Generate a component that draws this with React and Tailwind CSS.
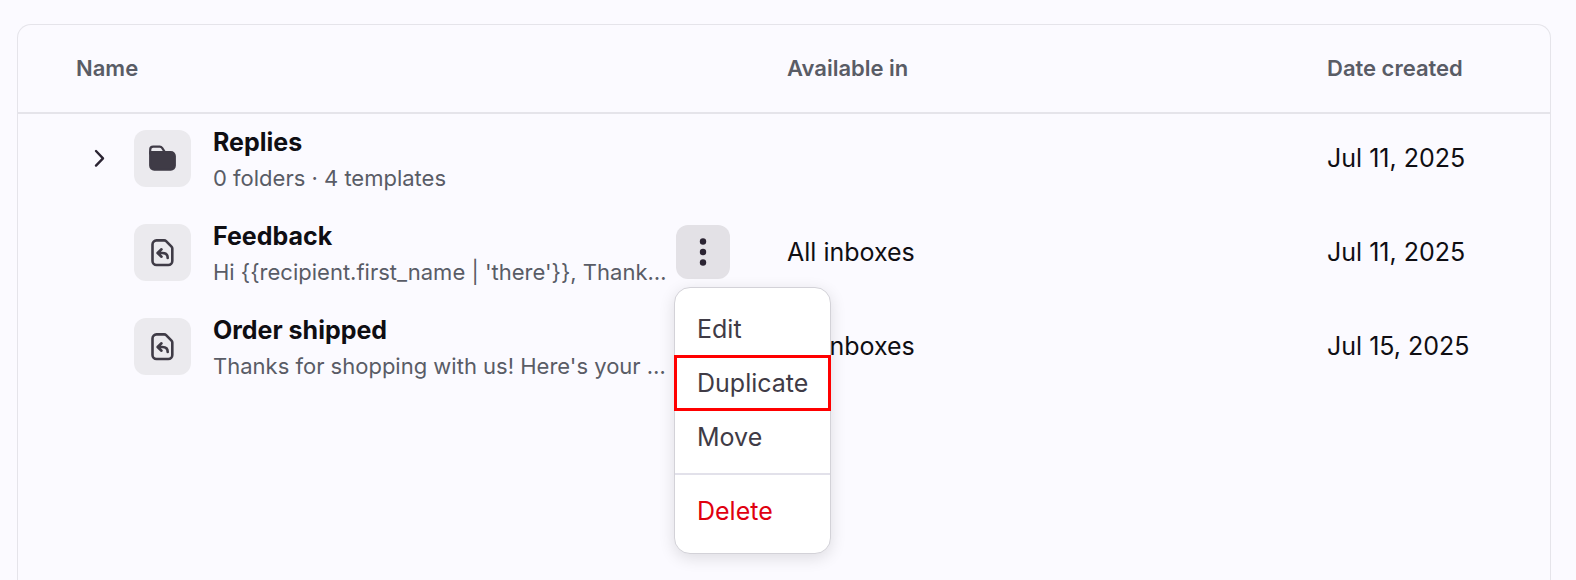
import { useState } from 'react';

const rows = [
  {
    id: 1,
    type: 'folder',
    name: 'Replies',
    description: '0 folders · 4 templates',
    inboxes: '',
    created: 'Jul 11, 2025',
  },
  {
    id: 2,
    type: 'template',
    name: 'Feedback',
    description: "Hi {{recipient.first_name | 'there'}}, Thank…",
    inboxes: 'All inboxes',
    created: 'Jul 11, 2025',
  },
  {
    id: 3,
    type: 'template',
    name: 'Order shipped',
    description: "Thanks for shopping with us! Here's your …",
    inboxes: 'All inboxes',
    created: 'Jul 15, 2025',
  },
];

const ChevronIcon = () => (
  <svg viewBox="0 1 32 32" className="w-8 h-8" fill="none" stroke="#2b2433" strokeWidth="2.4" strokeLinecap="round" strokeLinejoin="round">
    <path d="M13 9l7 7.3-7 7.3" />
  </svg>
);

const FolderIcon = () => (
  <svg viewBox="0.5 0.5 32 32" className="w-8 h-8" fill="none" stroke="#3f3b46" strokeWidth="2.2" strokeLinejoin="round">
    <path d="M3.7 12V7.2a3 3 0 0 1 3-3h6.6c1 0 1.7.3 2.3 1.1l2.6 4" />
    <path d="M3.7 9.6h20.6a4 4 0 0 1 4 4v9.5a4 4 0 0 1-4 4H7.7a4 4 0 0 1-4-4z" fill="#3f3b46" />
  </svg>
);

const TemplateIcon = () => (
  <svg viewBox="0.5 0.5 32 32" className="w-8 h-8" fill="none" stroke="#3f3b46" strokeWidth="2.6" strokeLinecap="round" strokeLinejoin="round">
    <path d="M10 3.9h7.6c.8 0 1.5.3 2 .8l5.4 5.4c.6.6.8 1.2.8 2v12.4a4 4 0 0 1-4 4H10a4 4 0 0 1-4-4V7.9a4 4 0 0 1 4-4z" />
    <path d="M15 12.8l-3.9 3.7 3.9 3.7M11.5 16.5H16c3 0 5.2 1.8 5.2 5" />
  </svg>
);

const DotsIcon = () => (
  <svg viewBox="0 0 32 32" className="w-8 h-8" fill="#2b2433">
    <circle cx="16" cy="5.5" r="3.2" />
    <circle cx="16" cy="16" r="3.2" />
    <circle cx="16" cy="26.5" r="3.2" />
  </svg>
);

const RowMenu = () => (
  <div
    role="menu"
    className="absolute -left-0.5 top-[62px] z-10 w-[157px] pt-[14px] pb-[15px] bg-white border border-[#d3d2d8] rounded-2xl shadow-[0_4px_16px_rgba(0,0,0,0.12)] text-[#3f3b46]"
  >
    <button role="menuitem" className="block w-full h-[54px] pt-0.5 px-[22px] text-left">Edit</button>
    <button role="menuitem" className="block w-full h-[54px] pt-0.5 px-[22px] text-left outline-3 -outline-offset-2 outline-[#ff0000]">
      Duplicate
    </button>
    <button role="menuitem" className="block w-full h-[54px] pt-0.5 px-[22px] text-left">Move</button>
    <div className="h-0.5 my-[9px] bg-[#e2e1ea]" />
    <button role="menuitem" className="block w-full h-[54px] pt-0.5 px-[22px] text-left text-[#e0000f]">Delete</button>
  </div>
);

const TemplateRow = ({ row, menuOpen, onMenuClick }) => (
  <tr>
    <td className="pt-[10px] pb-3 pl-[65px] pr-[34px]">
      <div className="flex items-start">
        <div className="w-[51px] h-[57px] mt-1.5 flex items-center shrink-0">
          {row.type === 'folder' && (
            <button aria-label="Expand folder">
              <ChevronIcon />
            </button>
          )}
        </div>
        <div className="w-[57px] h-[57px] mt-1.5 flex items-center justify-center shrink-0 bg-[#ebeaee] rounded-xl">
          {row.type === 'folder' ? <FolderIcon /> : <TemplateIcon />}
        </div>
        <div className="flex-1 min-w-0 ml-[22px] leading-9 whitespace-nowrap overflow-hidden">
          <p className="font-bold text-[#0f0e13]">{row.name}</p>
          <p className="text-[22px] leading-9 text-[#595c66]">{row.description}</p>
        </div>
        <div className="relative w-[54px] ml-2 mt-[7px] shrink-0">
          {menuOpen && (
            <>
              <button
                onClick={onMenuClick}
                aria-label="More actions"
                className="w-[54px] h-[54px] flex items-center justify-center bg-[#e3e1e6] rounded-xl"
              >
                <DotsIcon />
              </button>
              <RowMenu />
            </>
          )}
        </div>
      </div>
    </td>
    <td className="px-[23px] pb-1">{row.inboxes}</td>
    <td className="px-[23px] pb-1">{row.created}</td>
  </tr>
);

const App = () => {
  const [openRow, setOpenRow] = useState(2);

  return (
    <div className="min-h-screen flex flex-col pt-6 pl-[17px] pr-[25px] bg-[#fbfaff] font-['Inter',sans-serif] text-[25px] text-[#0f0e13]">
      <div className="flex-1 border border-b-0 border-[#e5e4ea] rounded-t-[14px]">
        <table className="w-full table-fixed border-separate border-spacing-0">
          <thead>
            <tr className="text-left text-[22px] text-[#595c66]">
              <th className="h-[89px] pl-[58px] font-semibold border-b-2 border-[#e5e4ea]">Name</th>
              <th className="w-[540px] px-[23px] font-semibold border-b-2 border-[#e5e4ea]">Available in</th>
              <th className="w-[246px] px-[23px] font-semibold border-b-2 border-[#e5e4ea]">Date created</th>
            </tr>
          </thead>
          <tbody>
            {rows.map((row) => (
              <TemplateRow
                key={row.id}
                row={row}
                menuOpen={openRow === row.id}
                onMenuClick={() => setOpenRow(null)}
              />
            ))}
          </tbody>
        </table>
      </div>
    </div>
  );
};

export default App;
